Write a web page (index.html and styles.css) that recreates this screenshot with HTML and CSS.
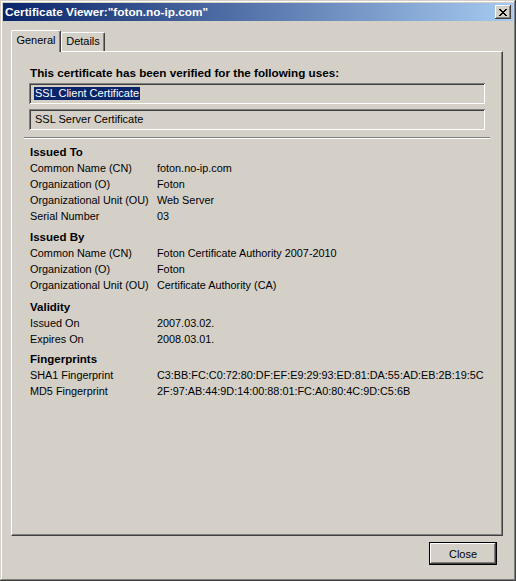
FILE: index.html
```html
<!DOCTYPE html>
<html>
<head>
<meta charset="utf-8">
<title>Certificate Viewer</title>
<link rel="stylesheet" href="styles.css">
</head>
<body>
<div class="window">
  <div class="titlebar">
    <span class="title">Certificate Viewer:"foton.no-ip.com"</span>
    <button class="tb-close" aria-label="Close"><svg width="8" height="7" viewBox="0 0 8 7" shape-rendering="crispEdges"><path fill="#000" d="M0 0h2v1H0z M6 0h2v1H6z M1 1h2v1H1z M5 1h2v1H5z M2 2h4v1H2z M3 3h2v1H3z M2 4h4v1H2z M1 5h2v1H1z M5 5h2v1H5z M0 6h2v1H0z M6 6h2v1H6z"/></svg></button>
  </div>
  <div class="client">
    <div class="tabs">
      <div class="tab active">General</div>
      <div class="tab">Details</div>
    </div>
    <div class="panel">
      <div class="verified">This certificate has been verified for the following uses:</div>
      <div class="listbox"><span class="item selected">SSL Client Certificate</span></div>
      <div class="listbox second"><span class="item">SSL Server Certificate</span></div>
      <div class="separator"></div>

      <div class="section">
        <div class="heading">Issued To</div>
        <div class="rows">
          <span>Common Name (CN)</span><span>foton.no-ip.com</span>
          <span>Organization (O)</span><span>Foton</span>
          <span>Organizational Unit (OU)</span><span>Web Server</span>
          <span>Serial Number</span><span>03</span>
        </div>
      </div>

      <div class="section">
        <div class="heading">Issued By</div>
        <div class="rows">
          <span>Common Name (CN)</span><span>Foton Certificate Authority 2007-2010</span>
          <span>Organization (O)</span><span>Foton</span>
          <span>Organizational Unit (OU)</span><span>Certificate Authority (CA)</span>
        </div>
      </div>

      <div class="section validity">
        <div class="heading">Validity</div>
        <div class="rows">
          <span>Issued On</span><span>2007.03.02.</span>
          <span>Expires On</span><span>2008.03.01.</span>
        </div>
      </div>

      <div class="section prints">
        <div class="heading">Fingerprints</div>
        <div class="rows">
          <span>SHA1 Fingerprint</span><span>C3:BB:FC:C0:72:80:DF:EF:E9:29:93:ED:81:DA:55:AD:EB:2B:19:5C</span>
          <span>MD5 Fingerprint</span><span>2F:97:AB:44:9D:14:00:88:01:FC:A0:80:4C:9D:C5:6B</span>
        </div>
      </div>
    </div>
    <div class="footer">
      <button class="btn">Close</button>
    </div>
  </div>
</div>
</body>
</html>
```

FILE: styles.css
```css
html, body {
  margin: 0;
  padding: 0;
  background: #d4d0c8;
}

body {
  font-family: "Liberation Sans", Arial, sans-serif;
  font-size: 10.85px;
  color: #000;
}

.window {
  width: 516px;
  height: 581px;
  box-sizing: border-box;
  padding: 3px;
  background: #d4d0c8;
  box-shadow: inset -1px -1px #404040, inset 1px 1px #d4d0c8, inset -2px -2px #808080, inset 2px 2px #fff;
  display: flex;
  flex-direction: column;
}

.titlebar {
  height: 18px;
  background: linear-gradient(to right, #0a246a, #a6caf0);
  display: flex;
  align-items: center;
  justify-content: space-between;
  padding: 0 2px;
}

.title {
  color: #fff;
  font-weight: bold;
  font-size: 11.8px;
  line-height: 18px;
  white-space: nowrap;
}

.tb-close {
  width: 16px;
  height: 14px;
  padding: 0;
  border: none;
  background: #d4d0c8;
  box-shadow: inset -1px -1px #404040, inset 1px 1px #fff, inset -2px -2px #808080, inset 2px 2px #d4d0c8;
  display: flex;
  align-items: center;
  justify-content: center;
}

.tb-close svg {
  display: block;
  margin: 0 0 0 -1px;
}

.client {
  padding: 9px 0 0 8px;
  display: flex;
  flex-direction: column;
}

.tabs {
  display: flex;
  align-items: flex-end;
  height: 21px;
  position: relative;
  z-index: 1;
}

.tab {
  box-sizing: border-box;
  height: 19px;
  width: 44px;
  background: #d4d0c8;
  border-top: 1px solid #fff;
  border-left: 1px solid #fff;
  border-right: 1px solid #404040;
  border-radius: 2px 2px 0 0;
  box-shadow: inset -1px 0 #808080;
  text-align: center;
  line-height: 17px;
  font-size: 11px;
}

.tab.active {
  width: 50px;
  height: 22px;
  margin-bottom: -1px;
  line-height: 18px;
  padding-bottom: 2px;
}

.panel {
  width: 492px;
  height: 485px;
  box-sizing: border-box;
  border-top: 1px solid #fff;
  border-left: 1px solid #fff;
  border-right: 1px solid #404040;
  border-bottom: 1px solid #404040;
  box-shadow: inset -1px -1px #808080;
  padding: 13px 0 0 17px;
}

.verified {
  font-weight: bold;
  font-size: 11.7px;
  line-height: 16px;
  padding-left: 1px;
  white-space: nowrap;
}

.listbox {
  width: 456px;
  height: 21px;
  box-sizing: border-box;
  margin-top: 2px;
  padding: 4px 0 0 5px;
  box-shadow: inset 1px 1px #808080, inset -1px -1px #fff, inset 2px 2px #404040, inset -2px -2px #d4d0c8;
}

.listbox.second {
  margin-top: 5px;
}

.item {
  display: inline-block;
  line-height: 13px;
  height: 13px;
  padding: 0 1px;
  font-size: 11px;
}

.item.selected {
  background: #0a246a;
  color: #fff;
}

.separator {
  width: 466px;
  margin: 7px 0 0 -5px;
  border-top: 1px solid #808080;
  border-bottom: 1px solid #fff;
}

.section {
  margin-top: 5px;
  padding-left: 1px;
}

.section.validity {
  margin-top: 6px;
}

.section.prints {
  margin-top: 4px;
}

.heading {
  font-weight: bold;
  font-size: 11.5px;
  line-height: 16px;
}

.rows {
  display: grid;
  grid-template-columns: 127px 1fr;
  line-height: 16px;
  white-space: nowrap;
}

.footer {
  width: 492px;
  box-sizing: border-box;
  margin-top: 6px;
  padding-right: 6px;
  display: flex;
  justify-content: flex-end;
}

.btn {
  width: 68px;
  height: 23px;
  padding: 0;
  border: none;
  background: #d4d0c8;
  font-family: "Liberation Sans", Arial, sans-serif;
  font-size: 11px;
  color: #000;
  box-shadow: inset 0 0 0 1px #000, inset -2px -2px #404040, inset 2px 2px #fff, inset -3px -3px #808080;
}
```
